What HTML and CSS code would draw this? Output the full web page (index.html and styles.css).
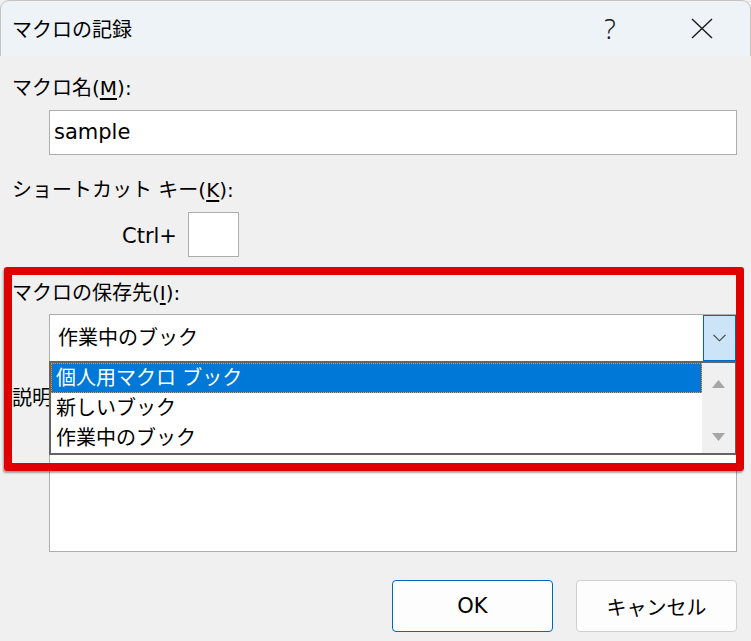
FILE: index.html
```html
<!DOCTYPE html>
<html lang="ja">

<head>
    <meta charset="UTF-8">
    <meta name="viewport" content="width=device-width, initial-scale=1.0">
    <title>マクロの記録</title>
    <link rel="stylesheet" href="styles.css">
</head>

<body>
    <div class="dialog">
        <div class="titlebar">
            <span class="title">マクロの記録</span>
            <span class="cap-btn help">?</span>
            <span class="cap-btn close">
                <svg width="22" height="21" viewBox="0 0 22 21">
                    <path d="M1 1 L21 20 M21 1 L1 20" stroke="#1a1a1a" stroke-width="1.4" fill="none" />
                </svg>
            </span>
        </div>

        <div class="content">
            <div class="label first">マクロ名(<u>M</u>):</div>
            <div class="field name-field">sample</div>

            <div class="label">ショートカット キー(<u>K</u>):</div>
            <div class="ctrl-row">
                <span class="ctrl">Ctrl+</span>
                <span class="key-box"></span>
            </div>

            <div class="label store-label">マクロの保存先(<u>I</u>):</div>
            <div class="combo">
                <span class="combo-text">作業中のブック</span>
                <span class="combo-btn">
                    <svg width="13" height="8" viewBox="0 0 13 8">
                        <path d="M0.5 0.8 L6.5 6.8 L12.5 0.8" stroke="#3c3c3c" stroke-width="1.1" fill="none" />
                    </svg>
                </span>
                <div class="combo-list">
                    <div class="list-items">
                        <div class="item selected">個人用マクロ ブック</div>
                        <div class="item">新しいブック</div>
                        <div class="item">作業中のブック</div>
                    </div>
                    <div class="list-scroll">
                        <svg width="13" height="8" viewBox="0 0 13 8">
                            <path d="M6.5 0 L13 8 L0 8 Z" fill="#a6a6a6" />
                        </svg>
                        <svg width="13" height="8" viewBox="0 0 13 8">
                            <path d="M0 0 L13 0 L6.5 8 Z" fill="#a6a6a6" />
                        </svg>
                    </div>
                </div>
            </div>

            <!-- the open list covers the rest of this label -->
            <div class="label desc-label">説明(<u>D</u>):</div>
            <div class="field desc-field"></div>

            <div class="buttons">
                <button class="btn ok">OK</button>
                <button class="btn">キャンセル</button>
            </div>
        </div>

        <div class="highlight"></div>
    </div>
</body>

</html>
```

FILE: styles.css
```css
body {
    margin: 0;
    font-family: "DejaVu Sans", "Noto Sans CJK JP", sans-serif;
    font-size: 20px;
    color: #000;
}

.dialog {
    position: relative;
    width: 751px;
    height: 641px;
    background: #f0f0f0;
    overflow: hidden;
}

/* title bar */
.titlebar {
    display: flex;
    align-items: center;
    height: 56px;
    box-sizing: border-box;
    background: #eef3f8;
    border: 1px solid #c4c4c4;
    border-bottom: 0;
    border-radius: 9px 9px 0 0;
}

.title {
    flex: 1;
    padding-left: 11px;
    font-family: "Noto Sans CJK JP", sans-serif;
    line-height: 56px;
}

.cap-btn {
    display: flex;
    align-items: center;
    justify-content: center;
    width: 92px;
    height: 54px;
}

.help {
    font-family: "Noto Sans", sans-serif;
    font-size: 27px;
    font-weight: 300;
    color: #1a1a1a;
}

.close {
    padding-right: 2px;
}

/* form */
.content {
    padding: 0 14px 0 12px;
}

.label {
    height: 40px;
    line-height: 40px;
    margin-top: 15px;
    white-space: nowrap;
}

.label.first {
    margin-top: 12px;
}

.store-label,
.desc-label {
    margin-top: 16px;
}

.desc-label {
    width: 37px;
    overflow: hidden;
}

u {
    text-underline-offset: 3px;
}

.field {
    margin: 2px 0 0 37px;
    box-sizing: border-box;
    background: #fff;
    border: 1px solid #adadad;
}

.name-field {
    height: 45px;
    line-height: 43px;
    padding-left: 4px;
    font-size: 21px;
}

.desc-field {
    height: 132px;
}

.ctrl-row {
    display: flex;
    align-items: center;
    margin: 2px 0 0 110px;
    height: 45px;
}

.ctrl {
    font-size: 21px;
    margin-right: 11px;
    padding-top: 3px;
}

.key-box {
    width: 51px;
    height: 45px;
    box-sizing: border-box;
    background: #fff;
    border: 1px solid #adadad;
}

/* combo box with open list */
.combo {
    position: relative;
    display: flex;
    margin: 1px 0 0 37px;
    height: 48px;
    box-sizing: border-box;
    background: #fff;
    border: 1px solid #adadad;
}

.combo-text {
    flex: 1;
    padding-left: 8px;
    line-height: 46px;
}

.combo-btn {
    display: flex;
    align-items: center;
    justify-content: center;
    width: 33px;
    box-sizing: border-box;
    background: #cce4f7;
    border: 1px solid #0067c0;
}

.combo-list {
    position: absolute;
    top: 100%;
    left: -1px;
    right: -1px;
    z-index: 2;
    display: flex;
    height: 94px;
    box-sizing: border-box;
    background: #fff;
    border: 2px solid #646464;
}

.list-items {
    flex: 1;
}

.item {
    height: 30px;
    line-height: 30px;
    padding-left: 5px;
    white-space: nowrap;
}

.item.selected {
    background: #0078d7;
    color: #fff;
    outline: 1px dotted #f39a3c;
    outline-offset: -1px;
}

.list-scroll {
    display: flex;
    flex-direction: column;
    justify-content: space-between;
    align-items: center;
    width: 33px;
    box-sizing: border-box;
    padding: 17px 0 12px;
    background: #f0f0f0;
}

/* buttons */
.buttons {
    display: flex;
    justify-content: flex-end;
    gap: 23px;
    margin-top: 28px;
}

.btn {
    width: 161px;
    height: 52px;
    background: #fdfdfd;
    border: 1px solid #d0d0d0;
    border-radius: 4px;
    font-family: "Noto Sans CJK JP", sans-serif;
    font-size: 20px;
    color: #000;
    padding: 0;
}

.btn.ok {
    border-color: #0067c0;
    font-family: "DejaVu Sans", sans-serif;
    font-size: 21px;
}

/* red annotation frame */
.highlight {
    position: absolute;
    left: 4px;
    top: 267px;
    width: 740px;
    height: 204px;
    box-sizing: border-box;
    border: 8px solid #e00000;
    border-radius: 3px;
    box-shadow: -1px 2px 2px rgba(0, 0, 0, 0.35);
    z-index: 3;
}
```
